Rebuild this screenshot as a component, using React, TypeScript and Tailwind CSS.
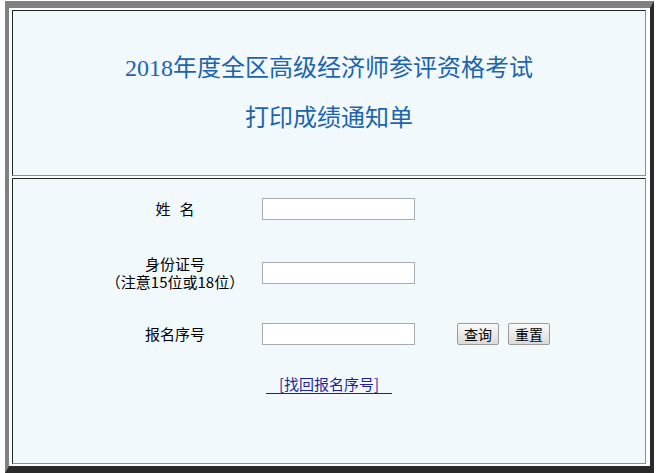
import React from 'react';

const cjk = { fontFamily: '"Noto Sans CJK SC", "Noto Sans", sans-serif' };
const titleFont = { fontFamily: '"Liberation Serif", "Noto Sans CJK SC", serif' };

const Field: React.FC = () => (
  <input
    type="text"
    className="ml-[17px] w-[153px] h-[22px] bg-white border border-[#a5acb2] outline-none"
  />
);

const Btn: React.FC<{ label: string }> = ({ label }) => (
  <button className="h-[22px] w-[42px] text-[14px] leading-[20px] text-black border border-[#9a9a9a] rounded-[2px] bg-gradient-to-b from-[#fafafa] to-[#dadada]">
    {label}
  </button>
);

export default function App() {
  return (
    <div className="min-h-[473px] bg-white pt-[1px] pl-[5px]" style={cjk}>
      <div className="w-[649px] h-[472px] border-t-[7px] border-l-[4px] border-r-[4px] border-b-[7px] border-t-[#808080] border-l-[#808080] border-r-[#2a2a2a] border-b-[#2a2a2a] bg-[#fbfdfe] pt-[2px] pl-[3px] pr-[4px] pb-[2px] flex flex-col gap-[2px]">
        {/* heading cell */}
        <div className="h-[166px] border border-t-[#1f2a2a] border-l-[#1f2a2a] border-r-[#8a8f8f] border-b-[#8a8f8f] bg-[#f1f9fd] flex flex-col items-center text-[#1d64ad] text-[24px] leading-[28px]" style={titleFont}>
          <div className="mt-[43px]">2018年度全区高级经济师参评资格考试</div>
          <div className="mt-[22px]">打印成绩通知单</div>
        </div>

        {/* form cell */}
        <div className="flex-1 border border-t-[#1f2a2a] border-l-[#1f2a2a] border-r-[#8a8f8f] border-b-[#8a8f8f] bg-[#f1f9fd] flex flex-col text-[15px] text-black">
          <div className="mt-[19px] h-[22px] flex items-center pl-[92px]">
            <div className="w-[140px] text-center">
              姓<span className="inline-block w-[9px]" />名
            </div>
            <Field />
          </div>

          <div className="mt-[34px] h-[38px] flex items-center pl-[92px]">
            <div className="w-[140px] text-center leading-[18px]">
              <div>身份证号</div>
              <div>（注意15位或18位）</div>
            </div>
            <Field />
          </div>

          <div className="mt-[31px] h-[22px] flex items-center pl-[92px]">
            <div className="w-[140px] text-center">报名序号</div>
            <Field />
            <div className="ml-[42px] flex gap-[9px]">
              <Btn label="查询" />
              <Btn label="重置" />
            </div>
          </div>

          <div className="mt-[29px] flex justify-center">
            <a href="#" className="inline-block px-[13px] leading-[19px] text-[#1f1fa0] border-b border-[#1f1fa0]">
              [找回报名序号]
            </a>
          </div>
        </div>
      </div>
    </div>
  );
}
